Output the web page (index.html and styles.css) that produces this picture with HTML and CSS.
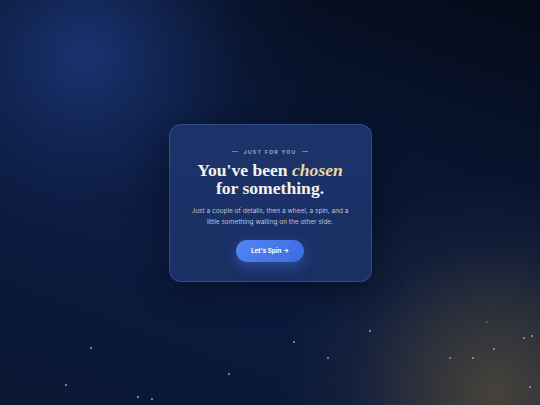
FILE: index.html
```html
<!DOCTYPE html>
<html lang="en">
<head>
<meta charset="utf-8">
<title>Just for you</title>
<link rel="stylesheet" href="styles.css">
</head>
<body>
<div class="sky">
  <span class="star" style="left:369px;top:330px"></span>
  <span class="star" style="left:293px;top:341px"></span>
  <span class="star" style="left:90px;top:347px"></span>
  <span class="star" style="left:327px;top:357px"></span>
  <span class="star" style="left:228px;top:373px"></span>
  <span class="star" style="left:65px;top:384px"></span>
  <span class="star" style="left:137px;top:396px"></span>
  <span class="star" style="left:151px;top:398px"></span>
  <span class="star" style="left:449px;top:357px"></span>
  <span class="star" style="left:472px;top:357px"></span>
  <span class="star" style="left:493px;top:348px"></span>
  <span class="star" style="left:523px;top:337px"></span>
  <span class="star" style="left:531px;top:335px"></span>
  <span class="star" style="left:529px;top:386px"></span>
  <span class="star dim" style="left:486px;top:321px"></span>
</div>
<main class="stage">
  <section class="card">
    <div class="eyebrow"><span class="dash"></span><span class="eyebrow-text">JUST FOR YOU</span><span class="dash"></span></div>
    <h1 class="title">You've been <em class="accent">chosen</em><br>for something.</h1>
    <p class="lede">Just a couple of details, then a wheel, a spin, and a little something waiting on the other side.</p>
    <button class="cta" type="button">Let's Spin →</button>
  </section>
</main>
</body>
</html>
```
FILE: styles.css
```css
html, body {
  margin: 0;
  padding: 0;
}
body {
  width: 540px;
  height: 405px;
  overflow: hidden;
  position: relative;
  font-family: Inter, "Noto Sans", sans-serif;
  background:
    radial-gradient(circle at 85px 55px, rgba(30, 58, 128, 0.8) 0, rgba(26, 52, 115, 0.5) 80px, rgba(20, 40, 95, 0.15) 160px, rgba(20, 40, 95, 0) 230px),
    radial-gradient(circle at 495px 390px, rgba(76, 71, 58, 0.9) 0, rgba(64, 62, 58, 0.65) 75px, rgba(40, 45, 62, 0.3) 145px, rgba(20, 30, 60, 0) 215px),
    linear-gradient(200deg, #050a18 0%, #081530 35%, #0b1a3d 65%, #0a1734 100%);
}
.sky {
  position: absolute;
  inset: 0;
  pointer-events: none;
}
.star {
  position: absolute;
  width: 1.5px;
  height: 1.5px;
  background: #8e97a8;
  opacity: 0.8;
}
.star.dim { opacity: 0.35; }
.stage {
  position: relative;
  width: 540px;
  height: 405px;
  display: flex;
  align-items: center;
  justify-content: center;
}
.card {
  box-sizing: border-box;
  width: 203px;
  height: 158px;
  padding: 23px 10px 0;
  border-radius: 12px;
  background: linear-gradient(180deg, #1c336a 0%, #1a2f63 100%);
  border: 1px solid rgba(120, 145, 200, 0.28);
  box-shadow: 0 10px 30px rgba(2, 6, 20, 0.45);
  display: flex;
  flex-direction: column;
  align-items: center;
  text-align: center;
}
.eyebrow {
  display: flex;
  align-items: center;
  gap: 5px;
  height: 8px;
}
.dash {
  width: 6px;
  height: 1px;
  background: rgba(170, 182, 205, 0.6);
}
.eyebrow-text {
  font-size: 5.3px;
  font-weight: 600;
  letter-spacing: 1.2px;
  color: #a9b4ca;
  line-height: 8px;
}
.title {
  margin: 5px 0 0;
  font-family: "Liberation Serif", "Times New Roman", serif;
  font-weight: 700;
  font-size: 17.6px;
  line-height: 18px;
  color: #f3f1ea;
}
.accent {
  color: #e9d8a0;
  font-style: italic;
}
.lede {
  margin: 9px 0 0;
  font-size: 6.5px;
  line-height: 11.5px;
  color: #b9c4db;
  width: 170px;
}
.cta {
  margin-top: 11px;
  width: 68px;
  height: 22px;
  border: none;
  border-radius: 11px;
  background: linear-gradient(135deg, #5187f3 0%, #3c6be2 100%);
  color: #ffffff;
  font-family: Inter, "Noto Sans", sans-serif;
  font-weight: 700;
  font-size: 6.3px;
  padding: 0;
  box-shadow: 0 4px 14px rgba(70, 120, 240, 0.45);
}
```
